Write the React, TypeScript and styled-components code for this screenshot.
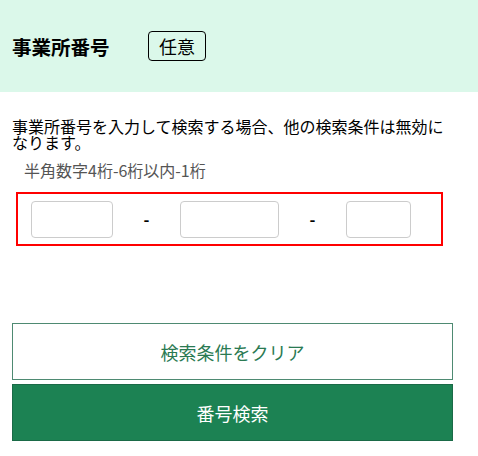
import React from "react";
import styled, { createGlobalStyle } from "styled-components";

const GlobalStyle = createGlobalStyle`
  body {
    margin: 0;
    background: #fff;
    font-family: "Noto Sans CJK JP", "Noto Sans", sans-serif;
    color: #000;
  }
`;

const Page = styled.div`
  width: 478px;
`;

const Header = styled.div`
  height: 92px;
  background: #dbf8ea;
  display: flex;
  align-items: center;
  padding-left: 12px;
  box-sizing: border-box;
`;

const Title = styled.h2`
  margin: 0;
  font-size: 19.5px;
  font-weight: bold;
  width: 136px;
`;

const Badge = styled.span`
  display: inline-flex;
  align-items: center;
  justify-content: center;
  width: 58px;
  height: 30px;
  box-sizing: border-box;
  border: 1px solid #000;
  border-radius: 4px;
  font-size: 18px;
`;

const Body = styled.div`
  padding: 26px 12px 0;
  width: 441px;
`;

const Description = styled.p`
  margin: 0;
  font-size: 16px;
  line-height: 16px;
`;

const Hint = styled.p`
  margin: 9px 0 0 12px;
  font-size: 16px;
  line-height: 22px;
  color: #555;
`;

const CodeBox = styled.div`
  margin: 11px 0 0 4px;
  width: 427px;
  height: 54px;
  box-sizing: border-box;
  border: 2px solid #f00;
  display: flex;
  align-items: center;
  gap: 30px;
  padding-left: 13px;
`;

const CodeInput = styled.input<{ $w: number }>`
  width: ${(p) => p.$w}px;
  height: 37px;
  box-sizing: border-box;
  border: 1px solid #ccc;
  border-radius: 4px;
  outline: none;
  padding: 0 6px;
`;

const Dash = styled.span`
  font-size: 16px;
  font-weight: bold;
  width: 7px;
  text-align: center;
`;

const Actions = styled.div`
  margin-top: 77px;
  display: flex;
  flex-direction: column;
  gap: 4px;
`;

const Button = styled.button<{ $primary?: boolean }>`
  height: 57px;
  width: 441px;
  box-sizing: border-box;
  font-family: inherit;
  font-size: 18px;
  cursor: pointer;
  border: 1px solid ${(p) => (p.$primary ? "#1a6a47" : "#4e8a72")};
  background: ${(p) => (p.$primary ? "#1c8253" : "#fff")};
  color: ${(p) => (p.$primary ? "#fff" : "#2a7a52")};
`;

const App: React.FC = () => {
  return (
    <Page>
      <GlobalStyle />
      <Header>
        <Title>事業所番号</Title>
        <Badge>任意</Badge>
      </Header>
      <Body>
        <Description>
          事業所番号を入力して検索する場合、他の検索条件は無効になります。
        </Description>
        <Hint>半角数字4桁-6桁以内-1桁</Hint>
        <CodeBox>
          <CodeInput $w={82} maxLength={4} />
          <Dash>-</Dash>
          <CodeInput $w={99} maxLength={6} />
          <Dash>-</Dash>
          <CodeInput $w={65} maxLength={1} />
        </CodeBox>
        <Actions>
          <Button>検索条件をクリア</Button>
          <Button $primary>番号検索</Button>
        </Actions>
      </Body>
    </Page>
  );
};

export default App;
